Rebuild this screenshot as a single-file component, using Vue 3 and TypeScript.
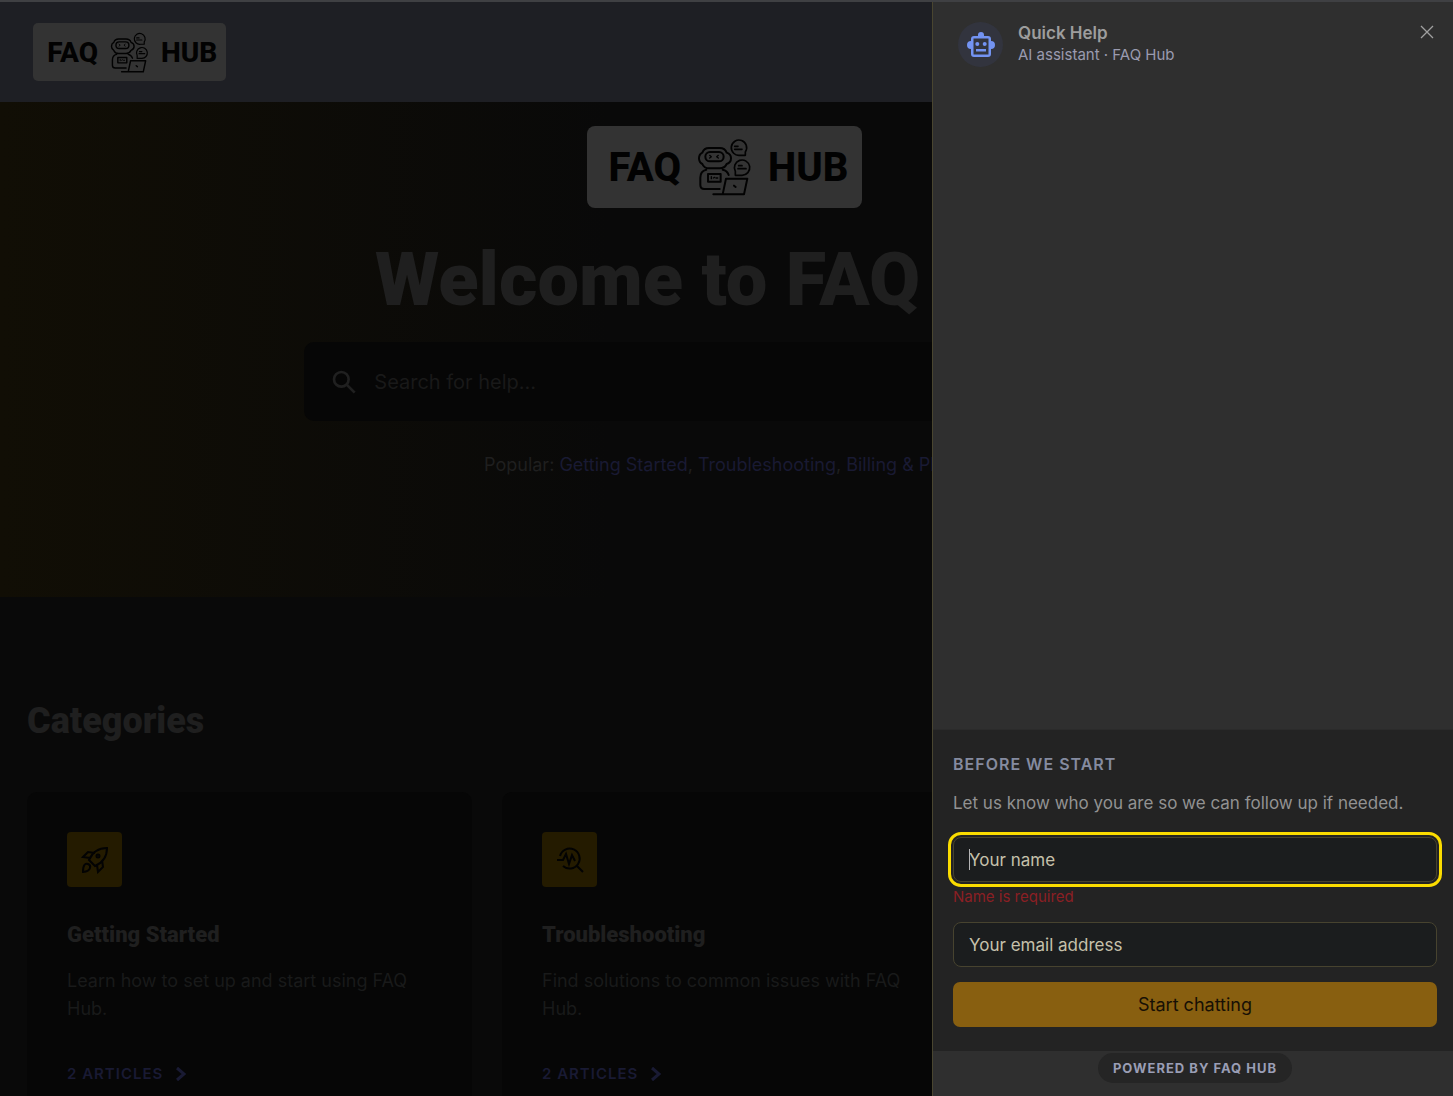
<script setup lang="ts">
import { ref } from 'vue'

interface Category {
  title: string
  text: string
  count: number
  icon: 'rocket' | 'diagnose' | 'card'
}

const categories: Category[] = [
  { title: 'Getting Started', text: 'Learn how to set up and start using FAQ Hub.', count: 2, icon: 'rocket' },
  { title: 'Troubleshooting', text: 'Find solutions to common issues with FAQ Hub.', count: 2, icon: 'diagnose' },
  { title: 'Billing & Plans', text: 'Manage your subscription and invoices.', count: 2, icon: 'card' },
]

const query = ref('')
const name = ref('')
const email = ref('')
</script>

<template>
  <div class="page">
    <svg class="defs" width="0" height="0" aria-hidden="true">
      <symbol id="bot-desk" viewBox="355 68 165 174">
        <g fill="none" stroke="#020202" stroke-width="6" stroke-linejoin="round" stroke-linecap="round">
          <path d="M371 112q5-14 20-14h32q16 0 21 14 13 4 13 17t-13 17q-6 13-21 13h-32q-15 0-20-13-10-5-10-17t10-17z" />
          <rect x="380" y="110" width="55" height="28" rx="14" />
          <path d="m393 120 5 4-5 4m26-8-5 4 5 4" stroke-width="4" />
          <path d="M383 163q-18 4-18 24v22q0 12 12 12h46M432 163q14 3 18 16" />
          <path d="M388 176h38v23h-38z" />
          <path d="M398 184v6m6-2 4-2m4 2h5" stroke-width="4" />
          <path d="M442 190h64l-10 47h-64zM404 237h90M466 211l5 4" />
          <path d="M500 110a23 23 0 1 0-16 10h16zM468 93h10m-10 9h22" stroke-width="5" />
          <path d="M470 168a23 23 0 1 1 20 12h-20zM480 151h10m-12 9h24" stroke-width="5" />
        </g>
      </symbol>
    </svg>

    <header class="topbar">
      <a class="logo small" href="#" aria-label="FAQ Hub home">
        <span>FAQ</span>
        <svg aria-hidden="true"><use href="#bot-desk" /></svg>
        <span>HUB</span>
      </a>
    </header>

    <main>
      <section class="hero">
        <div class="logo large">
          <span>FAQ</span>
          <svg aria-hidden="true"><use href="#bot-desk" /></svg>
          <span>HUB</span>
        </div>
        <h1>Welcome to FAQ Hub</h1>
        <form class="search" role="search" @submit.prevent>
          <svg viewBox="0 0 24 24" width="32" height="32" aria-hidden="true">
            <circle cx="10" cy="10" r="5.500" /><path d="m14 14 6 6" />
          </svg>
          <input v-model="query" type="search" aria-label="Search for help" placeholder="Search for help..." />
        </form>
        <p class="popular">
          Popular: <a href="#">Getting Started</a>, <a href="#">Troubleshooting</a>, <a href="#">Billing &amp; Plans</a>
        </p>
      </section>

      <section class="categories">
        <h2>Categories</h2>
        <div class="grid">
          <article v-for="item in categories" :key="item.title" class="card">
            <div class="tile">
              <svg v-if="item.icon === 'rocket'" viewBox="0 0 28 28" aria-hidden="true">
                <path d="M8 14C11 7 17 2 26 2c0 9-5 15-12 18zM9 12 2 11l5-5 7 1M16 19l1 7 5-5-1-7" />
                <circle cx="17" cy="10" r="1.500" />
                <path d="M2 26c0-7 2-9 5-8s4 7-5 8z" />
              </svg>
              <svg v-else-if="item.icon === 'diagnose'" viewBox="0 0 28 28" aria-hidden="true">
                <path d="M4 10a10 10 0 1 1 3 10M20 19l7 7M1 14h6l3-6 3 10 3-9 3 6" />
              </svg>
              <svg v-else viewBox="0 0 28 28" aria-hidden="true">
                <rect x="3" y="6" width="22" height="16" rx="2" /><path d="M3 12h22" />
              </svg>
            </div>
            <h3>{{ item.title }}</h3>
            <p>{{ item.text }}</p>
            <a class="more" href="#">
              {{ item.count }} ARTICLES
              <svg viewBox="0 0 10 16" width="10" height="16" aria-hidden="true"><path d="m1 2 7 6-7 6" /></svg>
            </a>
          </article>
        </div>
      </section>
    </main>

    <aside class="drawer" aria-label="Quick Help">
      <div class="drawer-head">
        <div class="avatar">
          <svg viewBox="0 0 28 28" width="28" height="28" aria-hidden="true">
            <path fill-rule="evenodd" d="M14 1a3 3 0 0 1 3 3v1h4a3 3 0 0 1 3 3v2a4 4 0 0 1 0 8v5a3 3 0 0 1-3 3H7a3 3 0 0 1-3-3v-5a4 4 0 0 1 0-8V8a3 3 0 0 1 3-3h4V4a3 3 0 0 1 3-3zM6.500 7.500v16h15v-16z" />
            <circle cx="10.300" cy="13" r="2" /><circle cx="17.700" cy="13" r="2" />
            <path d="M9 18h10v2.500H9z" />
          </svg>
        </div>
        <div class="who">
          <strong>Quick Help</strong>
          <span>AI assistant · FAQ Hub</span>
        </div>
        <button class="close" type="button" aria-label="Close">
          <svg viewBox="0 0 14 14" width="14" height="14" aria-hidden="true"><path d="m1 1 12 12M13 1 1 13" /></svg>
        </button>
      </div>
      <div class="messages"></div>
      <form class="intro" novalidate @submit.prevent>
        <h4>BEFORE WE START</h4>
        <p>Let us know who you are so we can follow up if needed.</p>
        <div class="field active">
          <input v-model="name" type="text" aria-label="Your name" placeholder="Your name" aria-invalid="true" aria-describedby="name-error" />
          <i class="caret"></i>
        </div>
        <span id="name-error" class="error">Name is required</span>
        <div class="field">
          <input v-model="email" type="email" aria-label="Your email address" placeholder="Your email address" />
        </div>
        <button class="start" type="submit">Start chatting</button>
      </form>
      <footer class="powered"><a href="#">POWERED BY FAQ HUB</a></footer>
    </aside>
  </div>
</template>

<style>
body {
  margin: 0;
  background: #090909;
}
</style>

<style scoped>
* {
  box-sizing: border-box;
}
.page {
  height: 100vh;
  overflow: hidden;
  padding-right: 4px;
  border-top: 2px solid #3f4043;
  background: #090909;
  color: #1f1f1f;
  font-family: Inter, 'Liberation Sans', sans-serif;
}
.defs {
  position: absolute;
}
h1, h2, h3, h4, p {
  margin: 0;
}
h1, h2, h3 {
  font-family: Roboto, sans-serif;
  font-weight: 900;
}
a {
  color: #191a33;
  text-decoration: none;
}
.topbar {
  display: flex;
  align-items: center;
  height: 100px;
  margin-right: -4px;
  padding: 0 33px;
  background: #1e1f24;
}
.logo {
  display: flex;
  align-items: center;
  background: #333;
  color: #020202;
  font-family: Roboto, sans-serif;
  font-weight: 800;
}
.logo span {
  flex: 1;
}
.logo span:first-child {
  text-align: right;
}
.logo.small {
  width: 193px;
  height: 58px;
  gap: 12px;
  border-radius: 5px;
  font-size: 28px;
}
.logo.small svg {
  width: 39px;
  height: 41px;
}
.logo.large {
  width: 275px;
  height: 82px;
  gap: 16px;
  border-radius: 8px;
  font-size: 40px;
}
.logo.large svg {
  width: 55px;
  height: 58px;
}
.hero {
  display: flex;
  flex-direction: column;
  align-items: center;
  height: 495px;
  margin-right: -4px;
  padding: 24px 4px 0 0;
  background: linear-gradient(90deg, #110e05, #090909 42%);
}
h1 {
  margin: 25px 0 15px;
  font-size: 74px;
  line-height: 94px;
  white-space: nowrap;
}
.search {
  display: flex;
  align-items: center;
  gap: 14px;
  width: 58%;
  height: 79px;
  padding: 0 24px;
  border-radius: 10px;
  background: #060606;
}
.search svg {
  fill: none;
  stroke: #202020;
  stroke-width: 2;
}
.search input {
  flex: 1;
  min-width: 0;
  padding: 0;
  border: 0;
  outline: 0;
  background: transparent;
  color: #1f1f1f;
  font: 400 20px Inter, sans-serif;
}
.search input::placeholder {
  color: #191919;
}
.popular {
  margin-top: 30px;
  font-size: 18px;
  line-height: 28px;
  white-space: nowrap;
}
.categories {
  padding: 96px 27px 0;
}
h2 {
  font-size: 36px;
  line-height: 56px;
}
.grid {
  display: grid;
  grid-template-columns: repeat(3, 1fr);
  gap: 30px;
  margin-top: 43px;
}
.card {
  padding: 40px;
  border-radius: 10px;
  background: #060606;
}
.tile {
  display: grid;
  place-items: center;
  width: 55px;
  height: 55px;
  border-radius: 4px;
  background: #241b00;
}
.tile svg {
  width: 28px;
  height: 28px;
  fill: none;
  stroke: #030303;
  stroke-width: 2;
}
h3 {
  margin-top: 32px;
  font-size: 22px;
  line-height: 32px;
}
.card p {
  margin-top: 16px;
  color: #191a1a;
  font-size: 18px;
  line-height: 28px;
}
.more {
  display: flex;
  align-items: center;
  gap: 13px;
  margin-top: 41px;
  font-size: 15px;
  font-weight: 600;
  line-height: 20px;
  letter-spacing: 1px;
}
.more svg {
  fill: none;
  stroke: #191a33;
  stroke-width: 3;
}
.drawer {
  position: fixed;
  top: 2px;
  right: 0;
  bottom: 0;
  display: flex;
  flex-direction: column;
  width: 521px;
  border-left: 1px solid #49452f;
  background: #2f2f2f;
}
.drawer-head {
  display: flex;
  align-items: flex-start;
  gap: 15px;
  padding: 20px 16px 0 25px;
}
.avatar {
  display: grid;
  place-items: center;
  width: 45px;
  height: 45px;
  border-radius: 50%;
  background: #32343e;
}
.avatar svg {
  fill: #7393f2;
}
.who {
  display: flex;
  flex: 1;
  flex-direction: column;
  padding-top: 1px;
  color: #9a9bb0;
  font-size: 15px;
  line-height: 21px;
}
.who strong {
  color: #9d9d9d;
  font-size: 17px;
  font-weight: 600;
}
.close {
  display: grid;
  place-items: center;
  width: 20px;
  height: 20px;
  padding: 0;
  border: 0;
  background: none;
}
.close svg {
  fill: none;
  stroke: #a0a0a0;
  stroke-width: 1.300;
}
.messages {
  flex: 1;
}
.intro {
  display: flex;
  flex-direction: column;
  padding: 20px 16px 24px 20px;
  border-top: 1px solid #2b2b2b;
  background: #232323;
}
h4 {
  color: #858ba0;
  font-size: 16px;
  font-weight: 600;
  line-height: 28px;
  letter-spacing: 1px;
}
.intro p {
  margin: 11px 0 20px;
  color: #929292;
  font-size: 17px;
  line-height: 28px;
}
.field {
  position: relative;
  display: flex;
}
.field input {
  width: 100%;
  height: 45px;
  padding: 0 15px;
  border: 1px solid #47432f;
  border-radius: 8px;
  outline: 0;
  background: #1b1d1e;
  color: #c6c1ab;
  font: 400 17px Inter, sans-serif;
}
.field input::placeholder {
  color: #c6c1ab;
  opacity: 1;
}
.field.active input {
  outline: 3px solid #fbdc00;
  outline-offset: 2px;
}
.caret {
  position: absolute;
  top: 12px;
  left: 16px;
  width: 1px;
  height: 21px;
  background: #b5b5b5;
}
.error {
  margin: 5px 0 15px;
  color: #8b1f24;
  font-size: 15px;
  line-height: 20px;
}
.start {
  height: 45px;
  margin-top: 15px;
  border: 0;
  border-radius: 7px;
  background: #885f10;
  color: #171005;
  font: 400 18px Inter, sans-serif;
}
.powered {
  display: flex;
  justify-content: center;
  height: 45px;
  padding: 2px 16px 0 20px;
}
.powered a {
  height: 30px;
  padding: 0 15px;
  border-radius: 15px;
  background: #252525;
  color: #9a9eb5;
  font-size: 13px;
  font-weight: 700;
  line-height: 30px;
  letter-spacing: 1px;
}
</style>
